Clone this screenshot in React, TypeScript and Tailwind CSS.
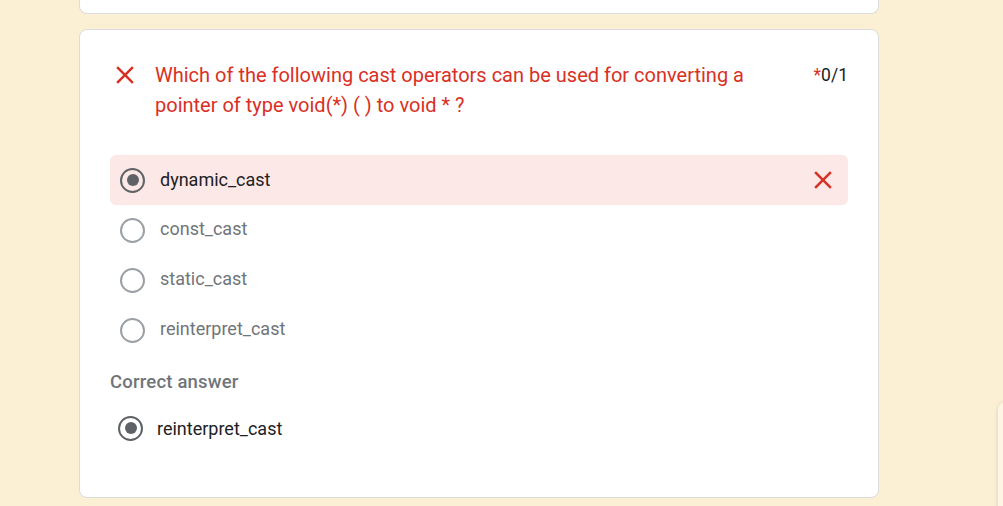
import React from 'react';

type Option = { label: string; selected?: boolean; wrong?: boolean };

const options: Option[] = [
  { label: 'dynamic_cast', selected: true, wrong: true },
  { label: 'const_cast' },
  { label: 'static_cast' },
  { label: 'reinterpret_cast' },
];

function CrossIcon({ className }: { className?: string }) {
  return (
    <svg viewBox="0 0 24 24" className={className} fill="currentColor">
      <path d="M19 6.41 17.59 5 12 10.59 6.41 5 5 6.41 10.59 12 5 17.59 6.41 19 12 13.41 17.59 19 19 17.59 13.41 12z" />
    </svg>
  );
}

function Radio({ checked }: { checked?: boolean }) {
  return (
    <div
      className={
        checked
          ? 'w-[25px] h-[25px] rounded-full border-[2.5px] border-[#5f6368] flex items-center justify-center shrink-0'
          : 'w-[25px] h-[25px] rounded-full border-[2.5px] border-[#9aa0a6] shrink-0'
      }
    >
      {checked && <div className="w-[12px] h-[12px] rounded-full bg-[#5f6368]" />}
    </div>
  );
}

export default function App() {
  return (
    <div className="relative w-[1003px] h-[506px] overflow-hidden bg-[#fbefd4] font-['Roboto',sans-serif]">
      <div className="ml-[79px] w-[800px]">
        {/* previous card, cut off at the top */}
        <div className="h-[14px] bg-white border border-t-0 border-[#dadce0] rounded-b-lg" />

        <div className="mt-[15px] bg-white border border-[#dadce0] rounded-lg px-[30px] pt-[30px] pb-[44px]">
          <div className="flex items-start">
            <div className="w-[30px] h-[30px] flex items-center justify-center text-[#d93025] shrink-0">
              <CrossIcon className="w-[30px] h-[30px]" />
            </div>
            <div className="ml-[15px] flex-1 pr-[40px] text-[20px] leading-[30px] text-[#d93025]">
              Which of the following cast operators can be used for converting a pointer of type void(*) ( ) to void * ?
            </div>
            <div className="text-[17.5px] leading-[30px] text-[#202124]">
              <span className="text-[#d93025]">*</span>0/1
            </div>
          </div>

          <div className="mt-[35px]">
            {options.map((o) => (
              <div
                key={o.label}
                className={
                  o.wrong
                    ? 'h-[50px] flex items-center pl-[10px] pr-[10px] rounded-md bg-[#fce8e6]'
                    : 'h-[50px] flex items-center pl-[10px] pr-[10px]'
                }
              >
                <Radio checked={o.selected} />
                <span
                  className={
                    o.selected
                      ? 'ml-[15px] flex-1 text-[18px] leading-[24px] text-[#202124]'
                      : 'ml-[15px] flex-1 text-[18px] leading-[24px] pb-[2px] text-[#70757a]'
                  }
                >
                  {o.label}
                </span>
                {o.wrong && <CrossIcon className="w-[30px] h-[30px] text-[#d93025]" />}
              </div>
            ))}
          </div>

          <div className="mt-[14px] text-[18.5px] leading-[26px] font-medium tracking-[0.2px] text-[#70757a]">Correct answer</div>

          <div className="mt-[8px] h-[50px] flex items-center pl-[8px]">
            <Radio checked />
            <span className="ml-[14px] text-[18px] text-[#202124]">reinterpret_cast</span>
          </div>
        </div>
      </div>

      {/* floating side panel peeking in at the right edge */}
      <div className="absolute left-[998px] top-[402px] w-[60px] h-[200px] bg-[#fdf6e4] rounded-lg shadow-[0_1px_4px_rgba(0,0,0,0.15)]" />
    </div>
  );
}
